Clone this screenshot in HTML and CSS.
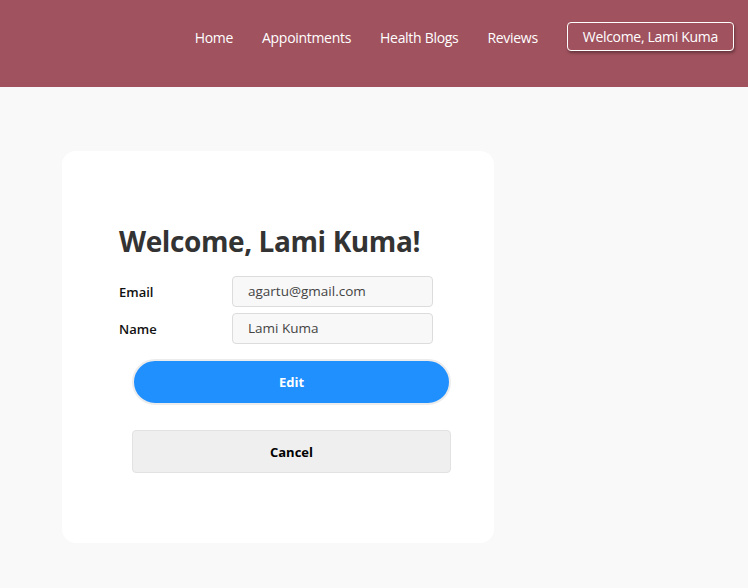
FILE: index.html
```html
<!DOCTYPE html>
<html>
<head>
<meta charset="utf-8">
<link rel="stylesheet" href="styles.css">
</head>
<body>
<header class="topbar">
  <nav class="nav">
    <a class="nav-link" href="#">Home</a>
    <a class="nav-link" href="#">Appointments</a>
    <a class="nav-link" href="#">Health Blogs</a>
    <a class="nav-link" href="#">Reviews</a>
    <a class="nav-user" href="#">Welcome, Lami Kuma</a>
  </nav>
</header>
<main class="main">
  <section class="card">
    <h1 class="title">Welcome, Lami Kuma!</h1>
    <div class="row">
      <label class="label">Email</label>
      <div class="field">agartu@gmail.com</div>
    </div>
    <div class="row">
      <label class="label">Name</label>
      <div class="field">Lami Kuma</div>
    </div>
    <button class="btn-edit">Edit</button>
    <button class="btn-cancel">Cancel</button>
  </section>
</main>
</body>
</html>
```
FILE: styles.css
```css
* { box-sizing: border-box; }
html, body { margin: 0; padding: 0; }
body {
  background: #f9f9f9;
  font-family: "Open Sans", "Noto Sans", sans-serif;
  color: #333;
  width: 748px;
  height: 588px;
  overflow: hidden;
}
.topbar {
  height: 87px;
  background: #a0525e;
  display: flex;
  justify-content: flex-end;
  align-items: flex-start;
  padding: 23px 14px 0 0;
}
.nav {
  display: flex;
  align-items: center;
  height: 29px;
}
.nav-link {
  color: #fff;
  text-decoration: none;
  font-size: 14px;
  margin-right: 29px;
  letter-spacing: -0.3px;
}
.nav-user {
  color: #fff;
  text-decoration: none;
  font-size: 14px;
  letter-spacing: -0.3px;
  height: 29px;
  line-height: 27px;
  padding: 0 15px;
  border: 1px solid #fff;
  border-radius: 4px;
  box-shadow: 1px 2px 3px rgba(0,0,0,0.35);
  margin-top: -2px;
}
.main {
  padding: 64px 0 0 62px;
}
.card {
  width: 432px;
  height: 392px;
  background: #fff;
  border-radius: 14px;
  padding: 70px 0 0 57px;
}
.title {
  margin: 0 0 15px 0;
  font-size: 28px;
  font-weight: 700;
  color: #333;
  line-height: 40px;
  letter-spacing: -0.4px;
}
.row {
  display: flex;
  align-items: center;
  margin-bottom: 6px;
}
.label {
  width: 113px;
  font-size: 13px;
  font-weight: 600;
  color: #111;
}
.field {
  width: 201px;
  height: 31px;
  line-height: 29px;
  background: #f8f8f8;
  border: 1px solid #dcdcdc;
  border-radius: 4px;
  padding-left: 15px;
  font-size: 13.5px;
  color: #444;
}
.btn-edit {
  display: block;
  margin: 15px 0 0 13px;
  width: 319px;
  height: 46px;
  border-radius: 23px;
  background: #2190ff;
  border: 2px solid #ececec;
  color: #fff;
  font-family: inherit;
  font-size: 13px;
  font-weight: 700;
}
.btn-cancel {
  display: block;
  margin: 25px 0 0 13px;
  width: 319px;
  height: 43px;
  border-radius: 4px;
  background: #efefef;
  border: 1px solid #e2e2e2;
  color: #000;
  font-family: inherit;
  font-size: 13px;
  font-weight: 700;
}
```
